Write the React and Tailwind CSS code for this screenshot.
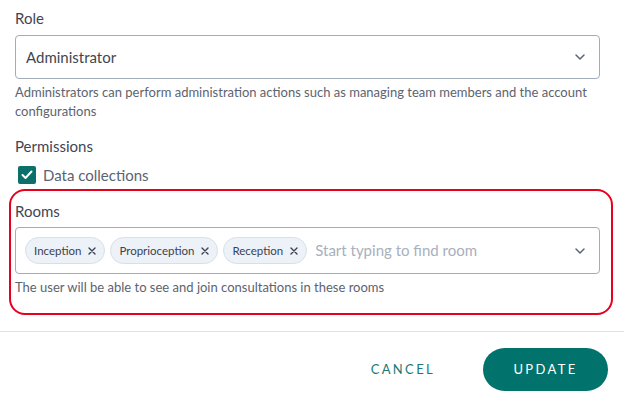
import React from 'react';

const Chevron = () => (
  <svg width="12" height="8" viewBox="0 0 12 8" fill="none" className="text-[#5b6472]">
    <path d="M2 2l4 4 4-4" stroke="currentColor" strokeWidth="1.5" strokeLinecap="round" strokeLinejoin="round" />
  </svg>
);

function Chip({ label }) {
  return (
    <span className="flex items-center gap-[7px] h-[27px] pl-[8px] pr-[8px] rounded-full bg-[#edf1f8] border border-[#d9dee7] text-[11.5px] text-[#3b4250]">
      {label}
      <svg width="8" height="8" viewBox="0 0 8 8" className="text-[#3b4250]">
        <path d="M1 1l6 6M7 1L1 7" stroke="currentColor" strokeWidth="1.4" strokeLinecap="round" />
      </svg>
    </span>
  );
}

export default function App() {
  return (
    <div className="w-[624px] h-[403px] bg-white font-['Lato','Noto_Sans',sans-serif] text-[#3f4653] overflow-hidden">
      <div className="pl-[15px] pr-[24px] pt-[6px]">
        {/* Role */}
        <div className="text-[15px] leading-[24px]">Role</div>
        <div className="mt-[5px] h-[44px] border border-[#a3acb9] rounded-[4px] flex items-center justify-between pl-[10px] pr-[13px]">
          <span className="text-[15px]">Administrator</span>
          <Chevron />
        </div>
        <p className="mt-[4px] text-[13px] leading-[19px] text-[#5c6370]">
          Administrators can perform administration actions such as managing team members and the account configurations
        </p>

        {/* Permissions */}
        <div className="mt-[13px] text-[15px] leading-[24px]">Permissions</div>
        <label className="mt-[5px] flex items-center gap-[7px] pl-[3px] h-[24px]">
          <span className="w-[18px] h-[18px] rounded-[2px] bg-[#0d6f69] flex items-center justify-center">
            <svg width="12" height="10" viewBox="0 0 12 10" fill="none">
              <path d="M1.5 5l3 3 6-6.5" stroke="white" strokeWidth="2" strokeLinecap="round" strokeLinejoin="round" />
            </svg>
          </span>
          <span className="text-[15px] text-[#5c6370]">Data collections</span>
        </label>

        {/* Rooms, highlighted */}
        <div className="mt-[2px] ml-[-6px] mr-[-13px] border-[2.5px] border-[#e8001c] rounded-[16px] pl-[4px] pr-[11px] pt-[8px] pb-[16px]">
          <div className="text-[15px] leading-[24px]">Rooms</div>
          <div className="mt-[4px] h-[47px] border border-[#a3acb9] rounded-[4px] flex items-center pl-[9px] pr-[13px]">
            <div className="flex items-center gap-[5px] flex-1">
              <Chip label="Inception" />
              <Chip label="Proprioception" />
              <Chip label="Reception" />
              <span className="ml-[3px] text-[15px] text-[#a8b0bd]">Start typing to find room</span>
            </div>
            <Chevron />
          </div>
          <p className="mt-[4px] text-[13px] leading-[19px] text-[#5c6370]">
            The user will be able to see and join consultations in these rooms
          </p>
        </div>
      </div>

      <div className="mt-[16px] h-px bg-[#dde3ea]" />

      <div className="flex items-center justify-end pr-[16px] pt-[16px] gap-[48px]">
        <button className="text-[13px] tracking-[0.18em] text-[#1a7a73]">CANCEL</button>
        <button className="w-[125px] h-[43px] rounded-full bg-[#02736c] text-white text-[13px] tracking-[0.18em]">
          UPDATE
        </button>
      </div>
    </div>
  );
}
